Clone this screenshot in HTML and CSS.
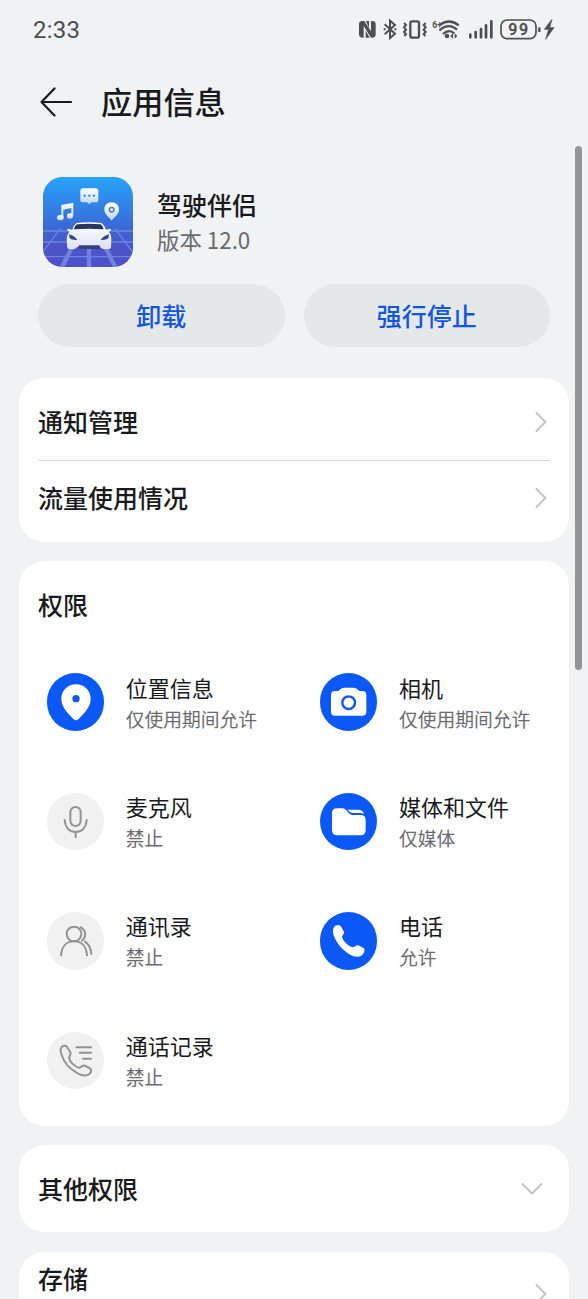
FILE: index.html
```html
<!DOCTYPE html>
<html lang="zh-CN">
<head>
<meta charset="utf-8">
<title>应用信息</title>
<link rel="stylesheet" href="styles.css">
</head>
<body>
<div class="screen">
  <header class="status">
    <span class="clock">2:33</span>
    <svg class="status-icons" viewBox="0 0 645 120" fill="none" stroke="#4d4e50" stroke-width="5">
      <path d="M43 33H37q-10 0-10 10v30q0 10 10 10h4V48L63 83h4q10 0 10-10V43q0-10-10-10h-4v31z" fill="#4d4e50" stroke="none"/>
      <path d="M48 33h9v22zM47 62l12 21H47z" fill="#4d4e50" stroke="none"/>
      <path d="M104 43l31 28-15 13V32l15 13-31 28" stroke-width="6"/>
      <path d="M101 58h6M133 58h6" stroke-width="6"/>
      <rect x="181" y="34" width="26" height="49" rx="5" stroke-width="7"/>
      <path d="M162 39l6 6-6 7 6 7-6 7 6 6-5 6M227 39l-6 6 6 7-6 7 6 7-6 6 5 6" stroke-width="6"/>
      <path d="M270 44Q299 24 326 46M268 61Q297 37 321 59M279 72Q297 56 313 70" stroke-width="7"/>
      <circle cx="291" cy="78" r="7" fill="#4d4e50" stroke="none"/>
      <path d="M301 78l8-8v16zM322 78l-8-8v16z" fill="#4d4e50" stroke="none"/>
      <path d="M361 82V74M377 82V66M393 82V57M408 82V46M424 82V34" stroke-width="8" stroke-linecap="round"/>
      <rect x="453" y="30" width="105" height="56" rx="18" stroke-width="5"/>
      <path d="M568 52v14" stroke-width="7"/>
      <path d="M606 28l-23 30h13l-9 30 25-35h-13z" fill="#4d4e50" stroke="#4d4e50" stroke-width="2"/>
      <text class="wifi-gen" x="247" y="53">6+</text>
      <text class="battery" x="475" y="75" textLength="59">99</text>
    </svg>
  </header>

  <div class="titlebar">
    <svg class="back" viewBox="0 0 32 30"><path d="M31 15H1.500M14.500 1.500L1.500 15l13 13.500"/></svg>
    <h1>应用信息</h1>
  </div>

  <section class="app">
    <svg class="app-icon" viewBox="0 0 270 270">
      <defs>
        <linearGradient id="sky" x1="0" y1="0" x2="0" y2="1">
          <stop offset="0" stop-color="#27a4f9"/><stop offset=".5" stop-color="#386fdb"/><stop offset=".75" stop-color="#4856c7"/><stop offset="1" stop-color="#5050cc"/>
        </linearGradient>
        <linearGradient id="pale" x1="0" y1="0" x2="0" y2="1">
          <stop offset="0" stop-color="#fff"/><stop offset="1" stop-color="#bcd6f8"/>
        </linearGradient>
        <linearGradient id="car" x1="0" y1="0" x2="0" y2="1">
          <stop offset="0" stop-color="#fff"/><stop offset="1" stop-color="#dedff5"/>
        </linearGradient>
        <clipPath id="tile"><rect width="270" height="270" rx="58"/></clipPath>
      </defs>
      <g clip-path="url(#tile)">
        <rect width="270" height="270" fill="url(#sky)"/>
        <g fill="none" stroke="#7f91e4" stroke-width="4" opacity=".75">
          <path d="M0 162H270M0 195H270M0 239H270M52 155L-12 240M216 155l70 92"/>
          <path d="M90 205L52 280M185 205l36 75M138 205v70" stroke-width="13"/>
        </g>
        <path d="M120 34h38q8 0 8 8v26q0 8-8 8h-12l-7 6-7-6h-12q-8 0-8-8V42q0-8 8-8z" fill="url(#pale)"/>
        <g fill="#4385d7"><circle cx="125" cy="56" r="3.500"/><circle cx="139" cy="56" r="3.500"/><circle cx="153" cy="56" r="3.500"/></g>
        <g fill="url(#pale)">
          <path d="M55 84l36-7v39h-6V93l-24 5v25h-6z"/>
          <ellipse cx="52" cy="122" rx="10" ry="8"/><ellipse cx="81" cy="117" rx="9" ry="8"/>
          <path d="M206 76c-13 0-22 9-22 22 0 15 16 23 22 33 6-10 22-18 22-33 0-13-9-22-22-22z"/>
        </g>
        <circle cx="206" cy="98" r="7" fill="#d7e6f7" stroke="#53799f" stroke-width="4"/>
        <path d="M100 138q39-5 75 0 9 6 14 20l13-3q5 7-5 9 9 8 8 25l-1 24q-7 6-24 3l-12-8h-62l-11 8q-17 3-22-3l-2-24q0-17 9-25-10-3-6-9l14 3q4-14 13-20z" fill="url(#car)"/>
        <path d="M102 142q36-4 71 0 7 5 9 15-43-4-90 0 3-10 10-15z" fill="#28355f"/>
        <path d="M78 172q17 5 25 17-17 1-23-5zM198 172q-17 5-25 17 17 1 23-5z" fill="#2c4b8d"/>
        <path d="M108 205h62v11h-62z" fill="#393e7c"/>
      </g>
    </svg>
    <div class="app-text">
      <h2>驾驶伴侣</h2>
      <p>版本 12.0</p>
    </div>
  </section>

  <div class="actions">
    <button class="action">卸载</button>
    <button class="action">强行停止</button>
  </div>

  <section class="card links">
    <div class="link"><span>通知管理</span><svg class="chevron" viewBox="0 0 12 20"><path d="M1.500 1L10.500 10l-9 9"/></svg></div>
    <div class="link"><span>流量使用情况</span><svg class="chevron" viewBox="0 0 12 20"><path d="M1.500 1L10.500 10l-9 9"/></svg></div>
  </section>

  <section class="card permissions">
    <h3>权限</h3>
    <div class="grid">
      <div class="perm">
        <svg class="perm-icon on" viewBox="0 0 173 173">
          <path class="solid" d="M87 34c-25 0-44 19-44 43 0 27 22 45 36 61q8 8 16 0c14-16 36-34 36-61 0-24-19-43-44-43z"/>
          <circle class="hole" cx="87" cy="77" r="11"/>
        </svg>
        <div class="perm-text"><b>位置信息</b><span>仅使用期间允许</span></div>
      </div>
      <div class="perm">
        <svg class="perm-icon on" viewBox="0 0 173 173">
          <path class="solid" d="M45 54h10l7-6q5-4 11-4h27q6 0 11 4l7 6h9q12 0 12 12v50q0 12-12 12H45q-12 0-12-12V66q0-12 12-12z"/>
          <circle class="ring" cx="86" cy="89" r="19"/>
        </svg>
        <div class="perm-text"><b>相机</b><span>仅使用期间允许</span></div>
      </div>
      <div class="perm">
        <svg class="perm-icon off" viewBox="0 0 173 173">
          <rect x="70" y="42" width="31" height="57" rx="15.500"/>
          <path d="M53 81c2 24 16 36 33 36s31-12 33-36M86 117v16"/>
        </svg>
        <div class="perm-text"><b>麦克风</b><span>禁止</span></div>
      </div>
      <div class="perm">
        <svg class="perm-icon on" viewBox="0 0 173 173">
          <path class="solid" d="M51 46h17q6 0 10 5l9 10q4 5 10 5h25q15 0 15 15v31q0 15-15 15H51q-15 0-15-15V61q0-15 15-15z"/>
          <path class="solid" d="M82 50h32q15 0 18 13-6-3-12-3H99q-6 0-10-4z"/>
        </svg>
        <div class="perm-text"><b>媒体和文件</b><span>仅媒体</span></div>
      </div>
      <div class="perm">
        <svg class="perm-icon off" viewBox="0 0 173 173">
          <circle cx="81" cy="66" r="22"/>
          <path d="M42 130c2-27 17-42 39-42s37 15 39 42M101 46c16 8 18 29 4 40M114 89c11 8 18 20 19 37"/>
        </svg>
        <div class="perm-text"><b>通讯录</b><span>禁止</span></div>
      </div>
      <div class="perm">
        <svg class="perm-icon on" viewBox="0 0 173 173">
          <path class="solid" d="M42 45c6-9 18-8 22 0l7 13c4 7-5 12-5 17 3 12 19 28 32 31 6 1 10-9 17-6l14 7c8 4 4 16-2 21-9 9-24 7-37 0C69 116 51 96 42 73c-4-10-5-20 0-28z"/>
        </svg>
        <div class="perm-text"><b>电话</b><span>允许</span></div>
      </div>
      <div class="perm">
        <svg class="perm-icon off" viewBox="0 0 173 173">
          <path d="M45 44c7-5 14-3 17 4l8 13c4 7-5 12-4 18 4 12 17 25 30 28 7 1 10-9 17-6l14 7c8 4 6 13 0 18-9 7-22 5-35-2C70 112 52 94 44 69c-4-10-5-20 1-25zM88 46h44M98 62h34M108 80h24"/>
        </svg>
        <div class="perm-text"><b>通话记录</b><span>禁止</span></div>
      </div>
    </div>
  </section>

  <section class="card other"><span>其他权限</span><svg class="chevron-down" viewBox="0 0 22 12"><path d="M1.500 1l9.500 9.500L20.500 1"/></svg></section>

  <section class="card storage"><span>存储</span><svg class="chevron" viewBox="0 0 12 20"><path d="M1.500 1L10.500 10l-9 9"/></svg></section>

  <div class="scrollbar"></div>
</div>
</body>
</html>
```
FILE: styles.css
```css
* { box-sizing: border-box; margin: 0; padding: 0; }

body {
  background: #f1f2f4;
  color: #191a1c;
  font-family: "Noto Sans CJK SC", sans-serif;
  overflow: hidden;
}

.screen {
  position: relative;
  width: 588px;
  height: 1299px;
  overflow: hidden;
}

.status {
  height: 60px;
  padding: 0 23px 0 33px;
  display: flex;
  justify-content: space-between;
  align-items: center;
}
.clock { font: 400 24px/34px Roboto, sans-serif; letter-spacing: 0.2px; color: #4d4e50; }
.status-icons { width: 215px; height: 40px; }
.wifi-gen { font: 700 26px Roboto, sans-serif; fill: #4d4e50; stroke: none; }
.battery { font: 500 48px Roboto, sans-serif; fill: #4d4e50; stroke: #4d4e50; stroke-width: 1; }

.titlebar {
  height: 84px;
  padding-left: 40px;
  display: flex;
  align-items: center;
  gap: 29px;
}
.back { width: 32px; height: 30px; }
.back path { fill: none; stroke: #191a1c; stroke-width: 2.2; stroke-linecap: round; stroke-linejoin: round; }
h1 { font-size: 31.200px; font-weight: 500; line-height: 44px; padding-bottom: 2px; }

.app {
  height: 140px;
  padding: 32.500px 0 0 43px;
  display: flex;
  gap: 24px;
}
.app-icon { width: 90px; height: 90px; }
.app-text { padding-top: 9px; }
h2 { font-size: 25px; font-weight: 500; line-height: 36px; }
.app-text p { font-size: 22.400px; line-height: 34px; color: #6a6b6e; }

.actions {
  display: flex;
  gap: 19px;
  padding: 0 38px;
}
.action {
  flex: 1;
  height: 63px;
  padding-bottom: 2px;
  border: 0;
  border-radius: 32px;
  background: #e6e7e9;
  color: #0f56e4;
  font: 500 25px/36px "Noto Sans CJK SC", sans-serif;
}

.card {
  width: 550px;
  margin-left: 19px;
  padding: 0 19px;
  border-radius: 25px;
  background: #fff;
  font-size: 25px;
  font-weight: 500;
}
.card > span, .link span { padding-bottom: 2px; }
.links { margin-top: 31px; height: 164px; padding-top: 6px; }
.link {
  height: 76px;
  display: flex;
  align-items: center;
  justify-content: space-between;
  padding-right: 3px;
}
.link + .link { height: 75px; border-top: 1px solid #dcdcde; }
.chevron { width: 12px; height: 20px; }
.chevron-down { width: 22px; height: 12px; }
.chevron path, .chevron-down path { fill: none; stroke: #c3c3c5; stroke-width: 2; stroke-linecap: round; stroke-linejoin: round; }

.permissions { margin-top: 19px; height: 565px; padding-top: 25px; }
h3 { font-size: 25px; font-weight: 500; line-height: 36px; }
.grid {
  display: grid;
  grid-template-columns: 273.200px 1fr;
  grid-auto-rows: 119.400px;
  margin-top: 20.500px;
  padding-left: 8.500px;
}
.perm { display: flex; align-items: center; gap: 21.500px; white-space: nowrap; }
.perm-icon { width: 57.700px; height: 57.700px; border-radius: 50%; }
.perm-icon.on { background: #0a59f7; }
.perm-icon.off { background: #f1f1f1; fill: none; stroke: #939393; stroke-width: 6; stroke-linecap: round; stroke-linejoin: round; }
.solid { fill: #fff; }
.hole { fill: #0a59f7; }
.ring { fill: none; stroke: #0a59f7; stroke-width: 7; }
.perm-text { display: flex; flex-direction: column; padding-top: 1px; }
.perm-text b { font-size: 22px; font-weight: 400; line-height: 31px; }
.perm-text span { font-size: 18.800px; font-weight: 400; line-height: 31px; color: #6a6b6e; }

.other {
  margin-top: 19px;
  height: 87px;
  padding-right: 26px;
  display: flex;
  align-items: center;
  justify-content: space-between;
}
.storage {
  margin-top: 20px;
  height: 84px;
  padding-right: 22px;
  display: flex;
  align-items: center;
  justify-content: space-between;
}
.storage span { line-height: 36px; align-self: flex-start; margin-top: 8px; }

.scrollbar {
  position: absolute;
  left: 575px;
  top: 146px;
  width: 7px;
  height: 524px;
  border-radius: 4px;
  background: #949597;
}
```
